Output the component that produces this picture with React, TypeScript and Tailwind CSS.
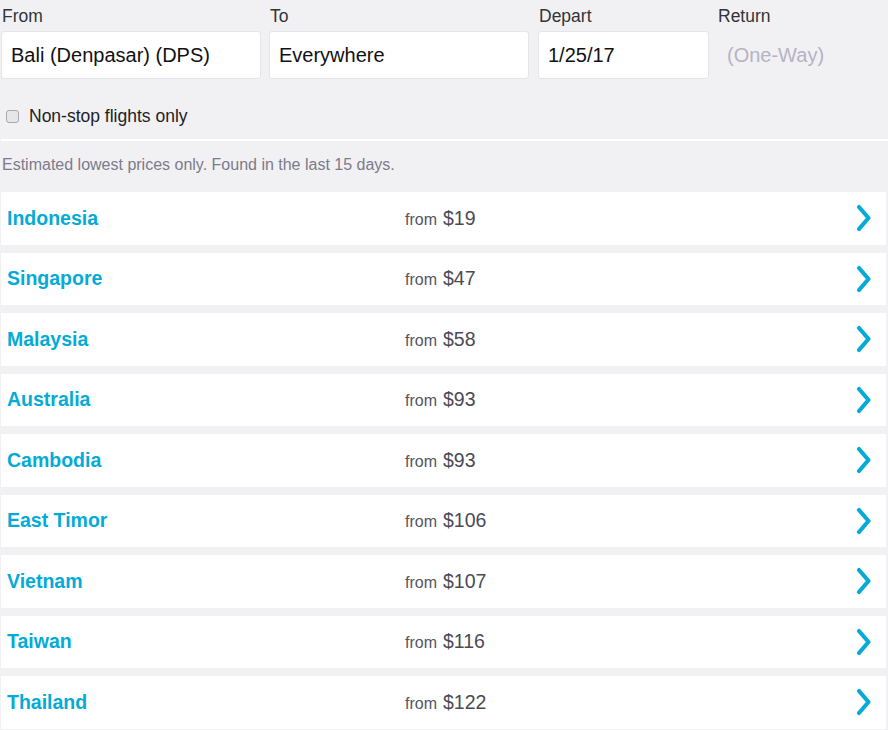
import React from "react";

const results = [
  { name: "Indonesia", price: "$19" },
  { name: "Singapore", price: "$47" },
  { name: "Malaysia", price: "$58" },
  { name: "Australia", price: "$93" },
  { name: "Cambodia", price: "$93" },
  { name: "East Timor", price: "$106" },
  { name: "Vietnam", price: "$107" },
  { name: "Taiwan", price: "$116" },
  { name: "Thailand", price: "$122" },
];

function Chevron() {
  return (
    <svg width="16" height="28" viewBox="0 0 16 28" fill="none">
      <path d="M3 3 L12.5 14 L3 25" stroke="#04abd6" strokeWidth="4.2" strokeLinecap="round" strokeLinejoin="round" />
    </svg>
  );
}

function Field({ label, value, width }: { label: string; value: string; width: string }) {
  return (
    <div className={`flex flex-col ${width}`}>
      <label className="text-[17.5px] leading-[18px] text-[#333338] mb-[6px] pl-[1px]">{label}</label>
      <div className="h-[48px] bg-white border border-[#e4e4ea] rounded-[3px] flex items-center pl-[9px] text-[20px] text-[#111]">
        {value}
      </div>
    </div>
  );
}

export default function App() {
  return (
    <div
      className="w-[888px] min-h-[730px] bg-[#f1f1f4] overflow-hidden"
      style={{ fontFamily: '"Liberation Sans", Arial, sans-serif' }}
    >
      <div className="pt-[7px] pl-[1px] flex">
        <Field label="From" value="Bali (Denpasar) (DPS)" width="w-[260px] mr-[8px]" />
        <Field label="To" value="Everywhere" width="w-[260px] mr-[9px]" />
        <Field label="Depart" value="1/25/17" width="w-[171px] mr-[9px]" />
        <div className="flex flex-col">
          <label className="text-[17.5px] leading-[18px] text-[#333338] mb-[6px]">Return</label>
          <div className="h-[48px] flex items-center pl-[9px] text-[20px] text-[#b6b3c2]">(One-Way)</div>
        </div>
      </div>

      <div className="flex items-center h-[28px] mt-[23px] pl-[6px]">
        <span className="w-[13px] h-[13px] rounded-[3px] border border-[#a9a9ae] bg-[#e6e6e9]" />
        <span className="ml-[10px] text-[17.5px] text-[#222226]">Non-stop flights only</span>
      </div>

      <div className="ml-[1px] mt-[9px] h-[2px] bg-white" />

      <p className="pl-[2px] mt-[15px] text-[16px] leading-[18px] text-[#7b7b8b]">
        Estimated lowest prices only. Found in the last 15 days.
      </p>

      <div className="mt-[18px] pl-[1px] pr-[2px] flex flex-col gap-2">
        {results.map((r) => (
          <div key={r.name} className="h-[52.5px] bg-white flex items-center">
            <div className="w-[404px] pl-[6px] text-[19.5px] font-bold text-[#04abd6]">{r.name}</div>
            <div className="flex items-baseline flex-1">
              <span className="text-[16px] text-[#55555e]">from</span>
              <span className="ml-[6px] text-[19.5px] text-[#4a4a55]">{r.price}</span>
            </div>
            <div className="pr-[14px] flex items-center">
              <Chevron />
            </div>
          </div>
        ))}
      </div>
    </div>
  );
}
